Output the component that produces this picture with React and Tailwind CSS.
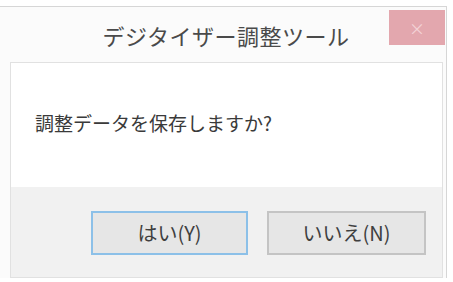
import React from 'react';

const font = { fontFamily: '"Noto Sans CJK JP", "Noto Sans", sans-serif' };

export default function App() {
  return (
    <div className="w-[453px] h-[282px] bg-white pt-[6px] overflow-hidden" style={font}>
      <div className="w-[447px] h-[272px] border-t border-r border-[#d6d6d6] bg-[#fbfbfb] flex flex-col">
        {/* title bar */}
        <div className="relative h-[55px] shrink-0 flex items-center justify-center">
          <span className="text-[22px] leading-none text-[#4a4a4a] tracking-[0.5px] pl-[6px]">デジタイザー調整ツール</span>
          <div className="absolute right-[1px] top-[3px] w-[56px] h-[35px] bg-[#e3a7ae] flex items-center justify-center">
            <span className="text-[#f3d3d7] text-[16px] leading-none">×</span>
          </div>
        </div>
        {/* content */}
        <div className="ml-[10px] mr-[3px] h-[216px] border border-[#e1e1e1] flex flex-col">
          <div className="h-[124px] bg-white flex items-center pl-[24px] pb-[6px]">
            <span className="text-[19px] leading-none text-[#3a3a3a]">調整データを保存しますか?</span>
          </div>
          <div className="flex-1 bg-[#f1f1f1] flex justify-end items-start pt-[24px] pr-[16px] gap-[19px]">
            <button className="w-[157px] h-[44px] bg-[#e6e6e6] border-2 border-[#8cc0e8] text-[20px] leading-none text-[#3f3f3f]">
              はい(Y)
            </button>
            <button className="w-[159px] h-[44px] bg-[#e6e6e6] border-2 border-[#c4c4c4] text-[20px] leading-none text-[#3f3f3f]">
              いいえ(N)
            </button>
          </div>
        </div>
      </div>
    </div>
  );
}
